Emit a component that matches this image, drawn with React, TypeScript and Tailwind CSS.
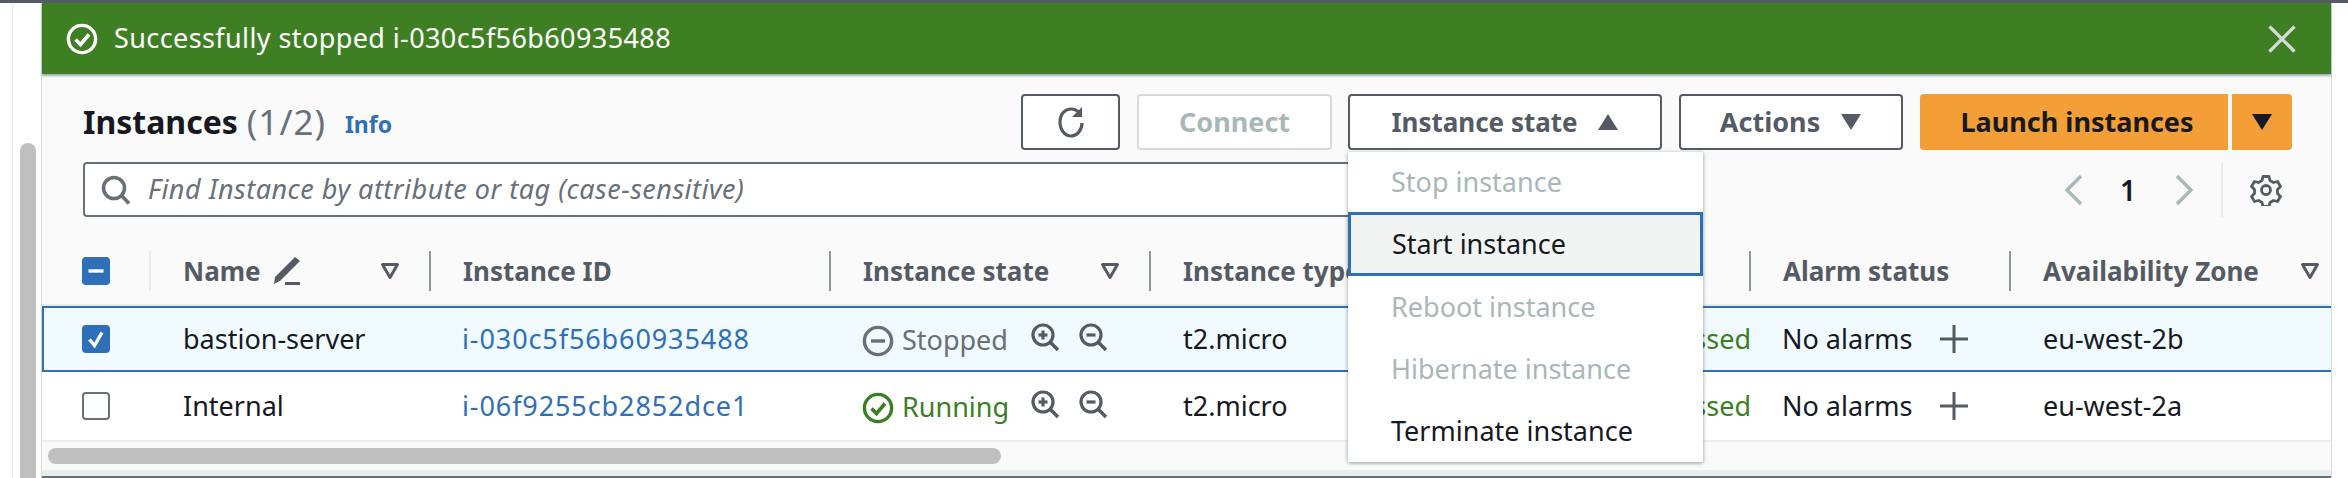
const ROW_GRID = "grid grid-cols-[107px_280px_400px_320px_350px_250px_260px_323px]";

function CircleIcon({ kind, className }: { kind: "check" | "minus"; className: string }) {
  return (
    <svg viewBox="0 0 32 32" fill="none" stroke="currentColor" strokeWidth="3.4" className={className}>
      <circle cx="16" cy="16" r="13.6" />
      {kind === "check" ? <path d="M9.5 16.5l5 5 8.5-10" strokeWidth="3.6" /> : <path d="M9 16h14" />}
    </svg>
  );
}

function Zoom({ plus }: { plus?: boolean }) {
  return (
    <svg viewBox="0 0 30 30" fill="none" stroke="#545b64" strokeWidth="3.2" className="h-[30px] w-[30px]">
      <circle cx="13" cy="13" r="10" />
      <path d="M20.5 20.5l7.5 7.5" strokeWidth="3.6" />
      <path d="M8.5 13h9" />
      {plus && <path d="M13 8.5v9" />}
    </svg>
  );
}

function FilterIcon() {
  return (
    <svg viewBox="0 0 20 18" fill="none" stroke="#545b64" strokeWidth="3" className="h-[18px] w-[20px]">
      <path d="M2.5 2.500h15L10 15.500z" strokeLinejoin="round" />
    </svg>
  );
}

function Caret({ up, color }: { up?: boolean; color: string }) {
  return (
    <svg viewBox="0 0 22 18" fill={color} className="h-[18px] w-[22px]">
      <path d={up ? "M11 1l10 16H1z" : "M1 1h20L11 17z"} />
    </svg>
  );
}

function HeaderCell({
  label,
  filter,
  edit,
  light,
  tight,
}: {
  label?: string;
  filter?: boolean;
  edit?: boolean;
  light?: boolean;
  tight?: boolean;
}) {
  return (
    <div
      className={`flex h-[40px] items-center border-l-2 pl-[32px] ${tight ? "pr-[12px]" : "pr-[29px]"} ${
        light ? "border-[#eaeded]" : "border-[#879596]"
      }`}
    >
      <span className="whitespace-nowrap text-[26px] font-bold text-[#545b64]">{label}</span>
      {edit && (
        <svg viewBox="0 0 30 30" fill="#545b64" className="ml-[10px] h-[30px] w-[30px]">
          <path d="M24 1l5 4L9 25l-6 3 1-7z" />
          <path d="M14 26h15v3H14z" />
        </svg>
      )}
      {filter && (
        <span className="ml-auto">
          <FilterIcon />
        </span>
      )}
    </div>
  );
}

function Checkbox({ state }: { state: "on" | "mixed" | "off" }) {
  if (state === "off") {
    return <div className="h-[28px] w-[28px] rounded-[4px] border-2 border-[#687078] bg-white" />;
  }
  return (
    <div className="flex h-[28px] w-[28px] items-center justify-center rounded-[4px] bg-[#2f6fb7]">
      <svg viewBox="0 0 28 28" fill="none" stroke="white" strokeWidth="3.4" className="h-[28px] w-[28px]">
        {state === "on" ? <path d="M7.5 14.5l5 6 7.5-13" /> : <path d="M6.5 14h15" />}
      </svg>
    </div>
  );
}

type Row = {
  name: string;
  id: string;
  zone: string;
  running: boolean;
};

const ROWS: Row[] = [
  { name: "bastion-server", id: "i-030c5f56b60935488", zone: "eu-west-2b", running: false },
  { name: "Internal", id: "i-06f9255cb2852dce1", zone: "eu-west-2a", running: true },
];

function InstanceRow({ row }: { row: Row }) {
  const selected = !row.running;
  return (
    <div
      className={`${ROW_GRID} items-center text-[27px] text-[#16191f] ${
        selected
          ? "h-[66px] bg-[#f1faff] shadow-[inset_0_2px_0_#2f6fb7,inset_0_-2px_0_#2f6fb7,inset_2px_0_0_#2f6fb7]"
          : "h-[68px] bg-white"
      }`}
    >
      <div className="pl-[40px]">
        <Checkbox state={selected ? "on" : "off"} />
      </div>
      <div className="pl-[34px]">{row.name}</div>
      <div className="pl-[33px] tracking-[0.9px] text-[#2f6fb7]">{row.id}</div>
      <div className="flex items-center pl-[33px]">
        <CircleIcon
          kind={row.running ? "check" : "minus"}
          className={`mt-[4px] h-[32px] w-[32px] ${row.running ? "text-[#3b7f23]" : "text-[#687078]"}`}
        />
        <span className={`ml-[8px] mt-[3px] w-[108px] ${row.running ? "text-[#3b7f23]" : "text-[#687078]"}`}>
          {row.running ? "Running" : "Stopped"}
        </span>
        <span className="mb-[4px] ml-[20px] flex gap-[18px]">
          <Zoom plus />
          <Zoom />
        </span>
      </div>
      <div className="pl-[34px]">t2.micro</div>
      <div className="flex justify-end whitespace-nowrap text-[#3b7f23]">
        <span className="-mr-[2px]">2/2 checks passed</span>
      </div>
      <div className="flex items-center pl-[33px]">
        <span className="whitespace-nowrap">No alarms</span>
        <svg viewBox="0 0 28 28" fill="none" stroke="#545b64" strokeWidth="3" className="ml-[28px] h-[28px] w-[28px]">
          <path d="M14 0v28M0 14h28" />
        </svg>
      </div>
      <div className="pl-[34px]">{row.zone}</div>
    </div>
  );
}

const MENU = [
  { label: "Stop instance", disabled: true, first: true },
  { label: "Start instance", active: true },
  { label: "Reboot instance", disabled: true },
  { label: "Hibernate instance", disabled: true },
  { label: "Terminate instance" },
];

function StateMenu() {
  return (
    <div className="absolute left-0 top-[58px] z-10 w-[355px] bg-white text-[27px] shadow-[0_1px_4px_rgba(0,28,36,0.45)]">
      {MENU.map((item) => (
        <div
          key={item.label}
          className={`flex items-center whitespace-nowrap ${
            item.active
              ? "h-[64px] border-[3px] border-[#2f6fb7] bg-[#f2f3f3] pl-[41px] text-[#16191f]"
              : item.disabled
                ? `${item.first ? "h-[60px]" : "h-[62px]"} pl-[43px] text-[#aab7b8]`
                : "h-[62px] pl-[43px] text-[#16191f]"
          }`}
        >
          {item.label}
        </div>
      ))}
    </div>
  );
}

export default function App() {
  return (
    <div className="h-[478px] w-[2348px] overflow-hidden bg-white font-['Noto_Sans',sans-serif]">
      <div className="h-[3px] bg-[#545b64]" />
      <div className="flex h-[475px]">
        <div className="flex w-[42px] border-r border-[#d5dbdb] pl-[12px]">
          <div className="w-[8px] border-l border-[#eaeded]" />
          <div className="mt-[140px] h-[340px] w-[16px] rounded-t-[8px] bg-[#bfbfbf]" />
        </div>

        <div className="w-[2290px] border-r border-[#d5dbdb] bg-[#fafafa]">
          <div className="flex h-[71px] items-center bg-[#3f7f23] pl-[24px] pr-[35px] text-white shadow-[0_2px_2px_rgba(0,28,36,0.35)]">
            <CircleIcon kind="check" className="h-[32px] w-[32px]" />
            <span className="ml-[16px] text-[27px] tracking-[0.4px]">Successfully stopped i-030c5f56b60935488</span>
            <svg viewBox="0 0 28 28" fill="none" stroke="#d5dbdb" strokeWidth="3.2" className="ml-auto h-[28px] w-[28px]">
              <path d="M1.500 1.500l25 25M26.500 1.500l-25 25" />
            </svg>
          </div>

          <div className="flex h-[88px] items-start pl-[41px] pr-[39px] pt-[20px]">
            <div className="flex h-[56px] items-center">
              <span className="text-[32px] font-bold text-[#16191f]">Instances</span>
              <span className="ml-[9px] text-[35px] tracking-[1px] text-[#687078]">(1/2)</span>
              <span className="ml-[19px] mt-[4px] text-[23px] font-bold text-[#2f6fb7]">Info</span>
            </div>
            <div className="ml-auto flex items-start">
              <button
                type="button"
                className="flex h-[56px] w-[99px] items-center justify-center rounded-[4px] border-2 border-[#545b64] bg-white"
              >
                <svg viewBox="0 0 34 34" fill="none" stroke="#545b64" strokeWidth="3.2" className="h-[34px] w-[34px]">
                  <path d="M28 18c0 7-5 13-11 13S6 25 6 17 11 4 17 4c3.600 0 6.500 1.500 9 4.500" />
                  <path d="M28 2v10H18z" fill="#545b64" stroke="none" />
                </svg>
              </button>
              <button
                type="button"
                className="ml-[17px] h-[56px] w-[195px] rounded-[4px] border-2 border-[#d5dbdb] bg-white text-[27px] font-bold text-[#aab7b8]"
              >
                Connect
              </button>
              <div className="relative ml-[16px]">
                <button
                  type="button"
                  className="flex h-[56px] w-[314px] items-center justify-center gap-[19px] rounded-[4px] border-2 border-[#545b64] bg-white text-[26px] font-bold text-[#545b64]"
                >
                  Instance state
                  <Caret up color="#545b64" />
                </button>
                <StateMenu />
              </div>
              <button
                type="button"
                className="ml-[17px] flex h-[56px] w-[224px] items-center justify-center gap-[20px] rounded-[4px] border-2 border-[#545b64] bg-white text-[27px] font-bold text-[#545b64]"
              >
                Actions
                <Caret color="#545b64" />
              </button>
              <button
                type="button"
                className="ml-[17px] h-[56px] w-[308px] rounded-l-[4px] bg-[#f39e37] pl-[6px] text-[27px] font-bold text-[#16191f]"
              >
                Launch instances
              </button>
              <button
                type="button"
                className="ml-[4px] flex h-[56px] w-[60px] items-center justify-center rounded-r-[4px] bg-[#f39e37]"
              >
                <Caret color="#16191f" />
              </button>
            </div>
          </div>

          <div className="flex h-[76px] items-start pl-[41px]">
            <div className="flex h-[55px] w-[1317px] items-center rounded-[4px] border-2 border-[#687078] bg-white pl-[15px]">
              <svg viewBox="0 0 32 32" fill="none" stroke="#687078" strokeWidth="3.6" className="h-[32px] w-[32px]">
                <circle cx="14" cy="14" r="10.500" />
                <path d="M21.500 21.500l7.500 8" />
              </svg>
              <span className="ml-[16px] whitespace-nowrap text-[27px] italic tracking-[0.5px] text-[#687078]">
                Find Instance by attribute or tag (case-sensitive)
              </span>
            </div>
            <div className="ml-auto flex h-[55px] items-center">
              <svg viewBox="0 0 20 32" fill="none" stroke="#aab7b8" strokeWidth="3.4" className="h-[32px] w-[20px]">
                <path d="M17 2L3 16l14 14" />
              </svg>
              <span className="ml-[33px] w-[22px] text-center text-[28px] font-semibold text-[#16191f]">1</span>
              <svg viewBox="0 0 20 32" fill="none" stroke="#aab7b8" strokeWidth="3.4" className="ml-[35px] h-[32px] w-[20px]">
                <path d="M3 2l14 14L3 30" />
              </svg>
              <div className="ml-[27px] h-[55px] border-l-2 border-[#eaeded]" />
              <svg viewBox="0 0 32 32" fill="none" stroke="#545b64" strokeWidth="2.800" className="ml-[27px] mr-[49px] h-[32px] w-[32px]">
                <path
                  d="M13 2.500h6l1 4 3.500 2 4-1 3 5-3 3v4l3 3-3 5-4-1-3.500 2-1 4h-6l-1-4-3.500-2-4 1-3-5 3-3v-4l-3-3 3-5 4 1 3.500-2z"
                  strokeLinejoin="round"
                />
                <circle cx="16" cy="16" r="4.500" />
              </svg>
            </div>
          </div>

          <div className={`${ROW_GRID} h-[68px] items-center border-b-2 border-[#eaeded] bg-[#fafafa]`}>
            <div className="pl-[40px]">
              <Checkbox state="mixed" />
            </div>
            <HeaderCell label="Name" filter edit light />
            <HeaderCell label="Instance ID" />
            <HeaderCell label="Instance state" filter />
            <HeaderCell label="Instance type" />
            <div />
            <HeaderCell label="Alarm status" />
            <HeaderCell label="Availability Zone" filter tight />
          </div>

          {ROWS.map((row) => (
            <InstanceRow key={row.id} row={row} />
          ))}

          <div className="h-[30px] border-t-2 border-[#eaeded] pl-[6px] pt-[6px]">
            <div className="h-[16px] w-[953px] rounded-full bg-[#bfbfbf]" />
          </div>
          <div className="h-[8px] border-b-2 border-t-2 border-b-[#687078] border-t-[#eaeded] bg-[#eaeded]" />
        </div>
      </div>
    </div>
  );
}
